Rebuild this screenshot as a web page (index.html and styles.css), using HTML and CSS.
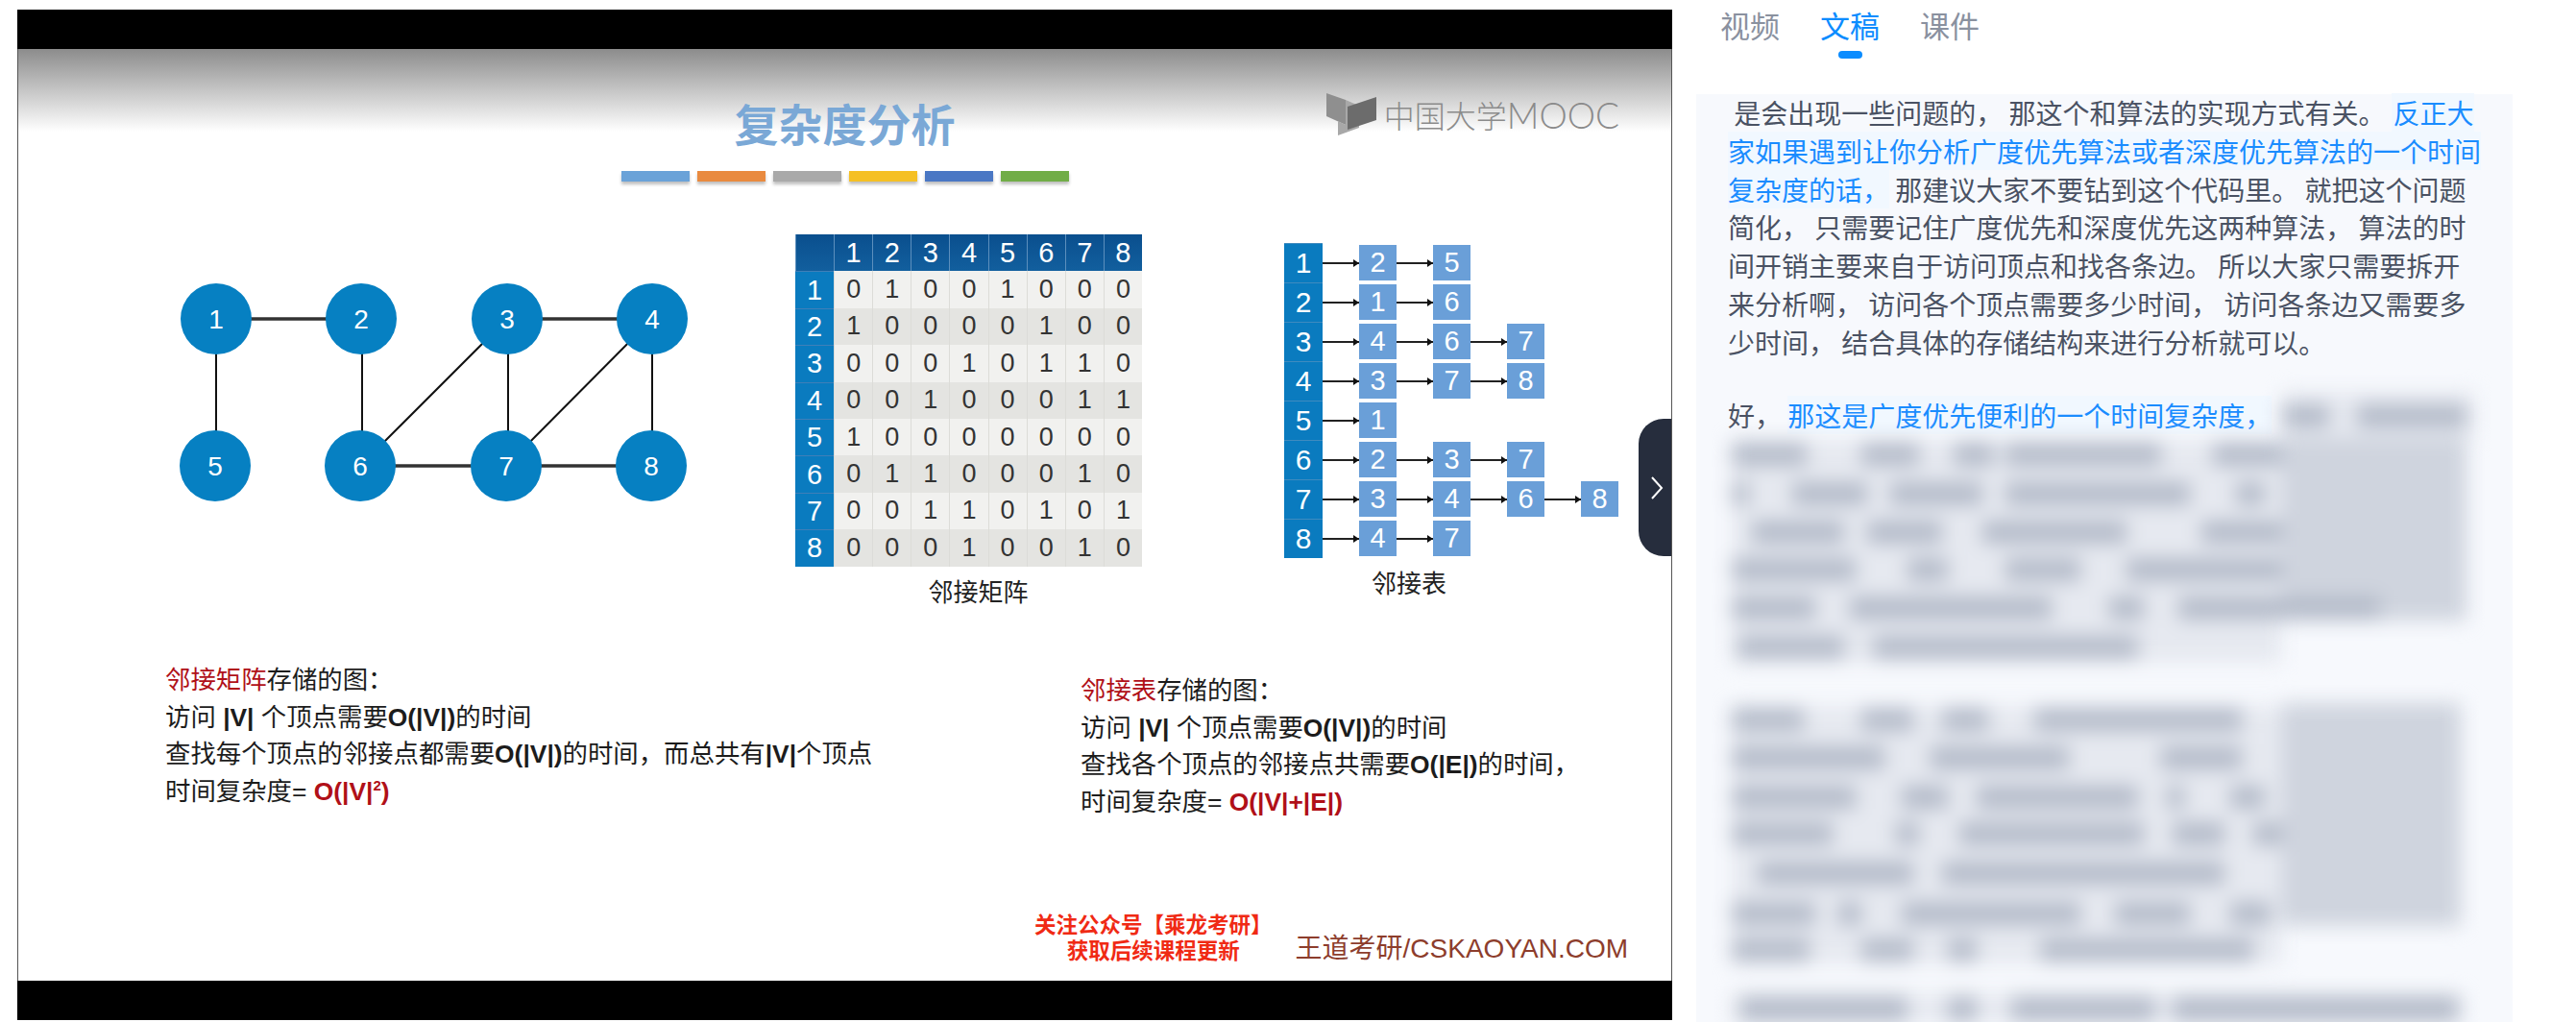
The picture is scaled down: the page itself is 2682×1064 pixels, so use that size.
FILE: index.html
```html
<!DOCTYPE html>
<html>
<head>
  <title>复杂度分析</title>
  <link rel="stylesheet" href="styles.css">
</head>
<body>
  <main class="video">
    <div class="video-bar"></div>
    <div class="slide">
      <div class="logo">
        <svg class="logo-icon" viewBox="0 0 54 44">
          <polygon points="0,0 20,7 20,33 0,24" fill="#8f8f8f"/>
          <polygon points="20,7 34,13 34,36 12,44 12,29 20,33" fill="#a8a8a8"/>
          <polygon points="22,14 52,4 52,28 22,38" fill="#6c6c6c"/>
        </svg>
        <span class="logo-cn">中国大学</span><span class="logo-en">MOOC</span>
      </div>

      <h1 class="slide-title">复杂度分析</h1>
      <div class="color-bars">
        <span class="bar bar-blue"></span>
        <span class="bar bar-orange"></span>
        <span class="bar bar-gray"></span>
        <span class="bar bar-yellow"></span>
        <span class="bar bar-navy"></span>
        <span class="bar bar-green"></span>
      </div>

      <div class="figures">
        <svg class="graph" viewBox="180 270 550 270">
          <g class="edges">
            <line x1="225" y1="332" x2="376" y2="332" class="edge-thick"/>
            <line x1="528" y1="332" x2="679" y2="332" class="edge-thick"/>
            <line x1="225" y1="332" x2="225" y2="485"/>
            <line x1="377" y1="332" x2="377" y2="485"/>
            <line x1="529" y1="332" x2="529" y2="485"/>
            <line x1="679" y1="332" x2="679" y2="485"/>
            <line x1="528" y1="332" x2="375" y2="485"/>
            <line x1="679" y1="332" x2="527" y2="485"/>
            <line x1="375" y1="485" x2="678" y2="485" class="edge-thick"/>
          </g>
          <g class="nodes">
            <ellipse cx="225" cy="332" rx="37" ry="37"/>
            <ellipse cx="376" cy="332" rx="37" ry="37"/>
            <ellipse cx="528" cy="332" rx="37" ry="37"/>
            <ellipse cx="679" cy="332" rx="37" ry="37"/>
            <ellipse cx="224" cy="485" rx="37" ry="37"/>
            <ellipse cx="375" cy="485" rx="37" ry="37"/>
            <ellipse cx="527" cy="485" rx="37" ry="37"/>
            <ellipse cx="678" cy="485" rx="37" ry="37"/>
          </g>
          <g class="node-labels">
            <text x="225" y="342">1</text>
            <text x="376" y="342">2</text>
            <text x="528" y="342">3</text>
            <text x="679" y="342">4</text>
            <text x="224" y="495">5</text>
            <text x="375" y="495">6</text>
            <text x="527" y="495">7</text>
            <text x="678" y="495">8</text>
          </g>
        </svg>

        <figure class="matrix-figure">
          <div class="matrix" id="matrix"></div>
          <figcaption>邻接矩阵</figcaption>
        </figure>

        <figure class="list-figure">
          <div class="adj-list" id="adj-list"></div>
          <figcaption>邻接表</figcaption>
        </figure>
      </div>

      <div class="notes">
        <div class="note note-left">
          <p><span class="red">邻接矩阵</span>存储的图：</p>
          <p>访问 <b>|V|</b> 个顶点需要<b>O(|V|)</b>的时间</p>
          <p>查找每个顶点的邻接点都需要<b>O(|V|)</b>的时间，而总共有<b>|V|</b>个顶点</p>
          <p>时间复杂度= <b class="red">O(|V|<sup>2</sup>)</b></p>
        </div>
        <div class="note note-right">
          <p><span class="red">邻接表</span>存储的图：</p>
          <p>访问 <b>|V|</b> 个顶点需要<b>O(|V|)</b>的时间</p>
          <p>查找各个顶点的邻接点共需要<b>O(|E|)</b>的时间，</p>
          <p>时间复杂度= <b class="red">O(|V|+|E|)</b></p>
        </div>
      </div>

      <div class="slide-foot">
        <div class="promo">关注公众号【乘龙考研】<br>获取后续课程更新</div>
        <div class="site">王道考研/CSKAOYAN.COM</div>
      </div>

      <button class="collapse">
        <svg viewBox="0 0 14 24"><polyline points="2,1 12,12 2,23"/></svg>
      </button>
    </div>
    <div class="video-bar"></div>
  </main>

  <aside class="side">
    <nav class="tabs">
      <a class="tab">视频</a>
      <a class="tab active">文稿</a>
      <a class="tab">课件</a>
    </nav>
    <div class="transcript">
      <p>&nbsp;是会出现一些问题的， 那这个和算法的实现方式有关。 <span class="hl">&#8202;反正大<br>家如果遇到让你分析广度优先算法或者深度优先算法的一个时间<br>复杂度的话，</span> 那建议大家不要钻到这个代码里。 就把这个问题<br>简化， 只需要记住广度优先和深度优先这两种算法， 算法的时<br>间开销主要来自于访问顶点和找各条边。 所以大家只需要拆开<br>来分析啊， 访问各个顶点需要多少时间， 访问各条边又需要多<br>少时间， 结合具体的存储结构来进行分析就可以。</p>
      <p>好， <span class="hl">那这是广度优先便利的一个时间复杂度，</span></p>
      <!-- rest of the transcript is blurred out in the page -->
      <svg class="blurred" viewBox="1766 408 916 656">
        <g class="blur-back">
          <rect x="2376" y="408" width="200" height="50"/>
          <rect x="1803" y="458" width="573" height="232"/>
          <rect x="1803" y="735" width="573" height="268"/>
          <rect x="1803" y="1035" width="760" height="29"/>
        </g>
        <g class="blur-side">
          <rect x="2376" y="456" width="192" height="190"/>
          <rect x="2376" y="732" width="186" height="232"/>
        </g>
        <g class="blur-text">
          <rect x="2376" y="421" width="49" height="24"/><rect x="2454" y="421" width="114" height="24"/>
          <rect x="1803" y="461" width="78" height="24"/><rect x="1938" y="461" width="60" height="24"/><rect x="2034" y="461" width="42" height="24"/><rect x="2088" y="461" width="162" height="24"/><rect x="2304" y="461" width="72" height="24"/>
          <rect x="1803" y="502" width="18" height="24"/><rect x="1866" y="502" width="78" height="24"/><rect x="1968" y="502" width="96" height="24"/><rect x="2088" y="502" width="192" height="24"/><rect x="2328" y="502" width="30" height="24"/>
          <rect x="1824" y="542" width="96" height="24"/><rect x="1944" y="542" width="78" height="24"/><rect x="2064" y="542" width="150" height="24"/><rect x="2292" y="542" width="84" height="24"/>
          <rect x="1803" y="581" width="129" height="24"/><rect x="1986" y="581" width="42" height="24"/><rect x="2088" y="581" width="78" height="24"/><rect x="2214" y="581" width="162" height="24"/>
          <rect x="1803" y="621" width="87" height="24"/><rect x="1926" y="621" width="210" height="24"/><rect x="2196" y="621" width="36" height="24"/><rect x="2268" y="621" width="210" height="24"/>
          <rect x="1809" y="662" width="111" height="24"/><rect x="1950" y="662" width="276" height="24"/>
          <rect x="1803" y="737" width="75" height="24"/><rect x="1938" y="737" width="54" height="24"/><rect x="2022" y="737" width="48" height="24"/><rect x="2118" y="737" width="216" height="24"/>
          <rect x="1803" y="777" width="159" height="24"/><rect x="2010" y="777" width="144" height="24"/><rect x="2250" y="777" width="84" height="24"/>
          <rect x="1803" y="818" width="129" height="24"/><rect x="1980" y="818" width="48" height="24"/><rect x="2058" y="818" width="168" height="24"/><rect x="2256" y="818" width="18" height="24"/><rect x="2322" y="818" width="36" height="24"/>
          <rect x="1803" y="856" width="105" height="24"/><rect x="1974" y="856" width="24" height="24"/><rect x="2040" y="856" width="192" height="24"/><rect x="2262" y="856" width="54" height="24"/><rect x="2346" y="856" width="30" height="24"/>
          <rect x="1830" y="897" width="162" height="24"/><rect x="2022" y="897" width="294" height="24"/>
          <rect x="1803" y="939" width="87" height="24"/><rect x="1914" y="939" width="24" height="24"/><rect x="1980" y="939" width="186" height="24"/><rect x="2202" y="939" width="78" height="24"/><rect x="2322" y="939" width="42" height="24"/>
          <rect x="1803" y="977" width="81" height="24"/><rect x="1938" y="977" width="54" height="24"/><rect x="2028" y="977" width="30" height="24"/><rect x="2124" y="977" width="222" height="24"/>
          <rect x="1812" y="1037" width="174" height="27"/><rect x="2028" y="1037" width="30" height="27"/><rect x="2094" y="1037" width="150" height="27"/><rect x="2262" y="1037" width="298" height="27"/>
        </g>
      </svg>
    </div>
  </aside>

  <script>
    const matrixData = [
      [0, 1, 0, 0, 1, 0, 0, 0],
      [1, 0, 0, 0, 0, 1, 0, 0],
      [0, 0, 0, 1, 0, 1, 1, 0],
      [0, 0, 1, 0, 0, 0, 1, 1],
      [1, 0, 0, 0, 0, 0, 0, 0],
      [0, 1, 1, 0, 0, 0, 1, 0],
      [0, 0, 1, 1, 0, 1, 0, 1],
      [0, 0, 0, 1, 0, 0, 1, 0],
    ];
    const adjData = [[2, 5], [1, 6], [4, 6, 7], [3, 7, 8], [1], [2, 3, 7], [3, 4, 6, 8], [4, 7]];

    function addCell(parent, className, text) {
      const cell = document.createElement('div');
      cell.className = className;
      cell.textContent = text;
      parent.appendChild(cell);
      return cell;
    }

    const matrix = document.getElementById('matrix');
    addCell(matrix, 'm-top', '');
    for (let i = 1; i <= 8; i++) addCell(matrix, 'm-top', i);
    matrixData.forEach((row, r) => {
      addCell(matrix, 'm-side', r + 1);
      row.forEach((v) => addCell(matrix, r % 2 ? 'm-cell m-even' : 'm-cell', v));
    });

    const adjList = document.getElementById('adj-list');
    adjData.forEach((items, r) => {
      const row = addCell(adjList, 'adj-row', '');
      addCell(row, 'adj-head', r + 1);
      items.forEach((v) => {
        addCell(row, 'adj-arrow', '');
        addCell(row, 'adj-cell', v);
      });
    });
  </script>
</body>
</html>
```

FILE: styles.css
```css
html, body {
  margin: 0;
  height: 1064px;
  overflow: hidden;
  background-color: #fff;
}
body {
  display: flex;
  font-family: "Liberation Sans", "Noto Sans CJK SC", sans-serif;
}

/* video + slide */
.video {
  margin: 10px 0 0 18px;
  width: 1723px;
  height: 1052px;
  display: flex;
  flex-direction: column;
  flex: none;
}
.video-bar {
  height: 41px;
  background-color: #000;
  flex: none;
}
.slide {
  position: relative;
  flex: 1;
  display: flex;
  flex-direction: column;
  border-left: 1px solid #555;
  border-right: 1px solid #555;
  background: linear-gradient(#8c8c8c, #fff 86px) no-repeat;
  color: #1c1c1c;
}
.slide-title {
  margin: 52px 0 3px;
  text-align: center;
  font-family: "Noto Sans CJK SC", sans-serif;
  font-size: 46px;
  line-height: 48px;
  font-weight: 700;
  color: #7aa8d6;
}
.logo {
  position: absolute;
  top: 45px;
  right: 54px;
  display: flex;
  align-items: center;
  font-weight: 300;
  color: #8b8b8b;
}
.logo-icon {
  width: 54px;
  height: 44px;
  margin-right: 6px;
}
.logo-cn {
  font-family: "Noto Sans CJK SC", sans-serif;
  font-size: 32px;
}
.logo-en {
  font-family: "Lato", sans-serif;
  font-size: 37px;
}
.color-bars {
  display: flex;
  justify-content: center;
  gap: 8px;
  margin-top: 24px;
}
.bar {
  width: 71px;
  height: 11px;
  box-shadow: 0 3px 3px rgba(0, 0, 0, 0.25);
}
.bar-blue { background-color: #6aa2d8; }
.bar-orange { background-color: #e98a3f; }
.bar-gray { background-color: #a9a9a9; }
.bar-yellow { background-color: #f5c024; }
.bar-navy { background-color: #4a77c4; }
.bar-green { background-color: #71ad47; }

/* diagrams row */
.figures {
  display: flex;
  align-items: flex-start;
  margin-top: 55px;
  padding-left: 161px;
  height: 386px;
}
.figures figure {
  margin: 0;
}
.figures figcaption {
  margin-top: 8px;
  text-align: center;
  font-family: "Noto Sans CJK SC", sans-serif;
  font-size: 26px;
  line-height: 34px;
  color: #222;
}
.graph {
  width: 550px;
  height: 270px;
  margin-top: 26px;
  flex: none;
}
.edges line {
  stroke: #111;
  stroke-width: 2;
}
.edges .edge-thick {
  stroke: #333;
  stroke-width: 3.5;
}
.nodes ellipse {
  fill: #0680c2;
}
.node-labels text {
  fill: #fff;
  font-size: 28px;
  text-anchor: middle;
}

.matrix-figure {
  width: 361px;
  margin-left: 98px !important;
  flex: none;
}
.matrix-figure figcaption {
  padding-left: 20px;
}
.matrix {
  display: grid;
  grid-template-columns: repeat(9, 1fr);
  grid-auto-rows: 38.4px;
  font-size: 27px;
}
.matrix div {
  display: flex;
  align-items: center;
  justify-content: center;
}
.m-top {
  background: linear-gradient(#0a4f8e, #125f9e);
  border-left: 1px solid #5c8fbd;
  color: #fff;
  font-size: 29px;
}
.m-side {
  background-color: #0a7bbf;
  border-top: 1px solid #3f7fb8;
  color: #fff;
  font-size: 29px;
}
.m-cell {
  background-color: #f1f1ef;
  border-left: 1px solid #dcdcd8;
  color: #333;
}
.m-even {
  background-color: #e4e4e1;
}

.list-figure {
  width: 350px;
  margin-left: 148px !important;
  margin-top: 9px !important;
  flex: none;
}
.list-figure figcaption {
  padding-right: 90px;
}
.adj-row {
  display: flex;
  align-items: center;
  height: 41px;
}
.adj-head {
  width: 40px;
  height: 41px;
  box-sizing: border-box;
  border-top: 1px solid #3f8bbf;
  background-color: #0a7bbf;
  color: #fff;
  font-size: 30px;
  line-height: 40px;
  text-align: center;
  flex: none;
}
.adj-arrow {
  position: relative;
  width: 38px;
  height: 2px;
  background-color: #222;
  flex: none;
}
.adj-arrow::after {
  content: "";
  position: absolute;
  right: 0;
  top: -3px;
  border-left: 6px solid #111;
  border-top: 4px solid transparent;
  border-bottom: 4px solid transparent;
}
.adj-cell {
  width: 39px;
  height: 37px;
  background-color: #6a9fd8;
  color: #fff;
  font-size: 29px;
  line-height: 37px;
  text-align: center;
  flex: none;
}

/* text under the diagrams */
.notes {
  display: flex;
  margin-top: 59px;
  padding-left: 153px;
  font-size: 26.4px;
  line-height: 38.5px;
}
.note p {
  margin: 0;
  white-space: nowrap;
}
.note-left {
  width: 953px;
}
.note-right {
  margin-top: 11px;
}
.red {
  color: #b01018;
}
.note sup {
  font-size: 15px;
  line-height: 0;
}
.slide-foot {
  margin-top: auto;
  padding: 0 45px 17px 0;
  display: flex;
  justify-content: flex-end;
  align-items: flex-end;
  gap: 24px;
}
.promo {
  font-size: 22.5px;
  font-weight: 700;
  line-height: 27px;
  text-align: center;
  color: #f02a14;
}
.site {
  font-size: 28px;
  line-height: 32px;
  color: #8d3d2c;
}
.collapse {
  position: absolute;
  right: 0;
  top: 385px;
  width: 34px;
  height: 143px;
  padding: 0 0 0 4px;
  border: none;
  border-radius: 26px 0 0 26px;
  background-color: #262d3d;
  display: flex;
  align-items: center;
  justify-content: center;
}
.collapse svg {
  width: 14px;
  height: 24px;
}
.collapse polyline {
  fill: none;
  stroke: #fff;
  stroke-width: 2;
}

/* right column */
.side {
  margin-left: 25px;
  width: 850px;
  flex: none;
  display: flex;
  flex-direction: column;
  font-family: "Noto Sans CJK SC", sans-serif;
}
.tabs {
  display: flex;
  gap: 42px;
  height: 88px;
  padding: 10px 0 0 25px;
  flex: none;
}
.tab {
  font-size: 31px;
  line-height: 31px;
  color: #8a919f;
}
.tab.active {
  color: #0b8cff;
}
.tab.active::after {
  content: "";
  display: block;
  width: 25px;
  height: 8px;
  margin: 12px auto 0;
  border-radius: 4px;
  background-color: #0b8cff;
}
.transcript {
  position: relative;
  flex: 1;
  padding: 0 33px;
  background-color: #f7f9fd;
  font-size: 28px;
  line-height: 39.8px;
  color: #4a5263;
}
.transcript p {
  margin: 0 0 36px;
  white-space: nowrap;
}
.hl {
  color: #1a8cff;
  background-color: #f1f8ff;
}
.blurred {
  position: absolute;
  left: 0;
  top: 310px;
  width: 916px;
  height: 656px;
  filter: blur(10px);
}
.blur-back rect {
  fill: #e6e9f0;
}
.blur-side rect {
  fill: #cfd4de;
}
.blur-text rect {
  fill: #b4bbc9;
}
```
